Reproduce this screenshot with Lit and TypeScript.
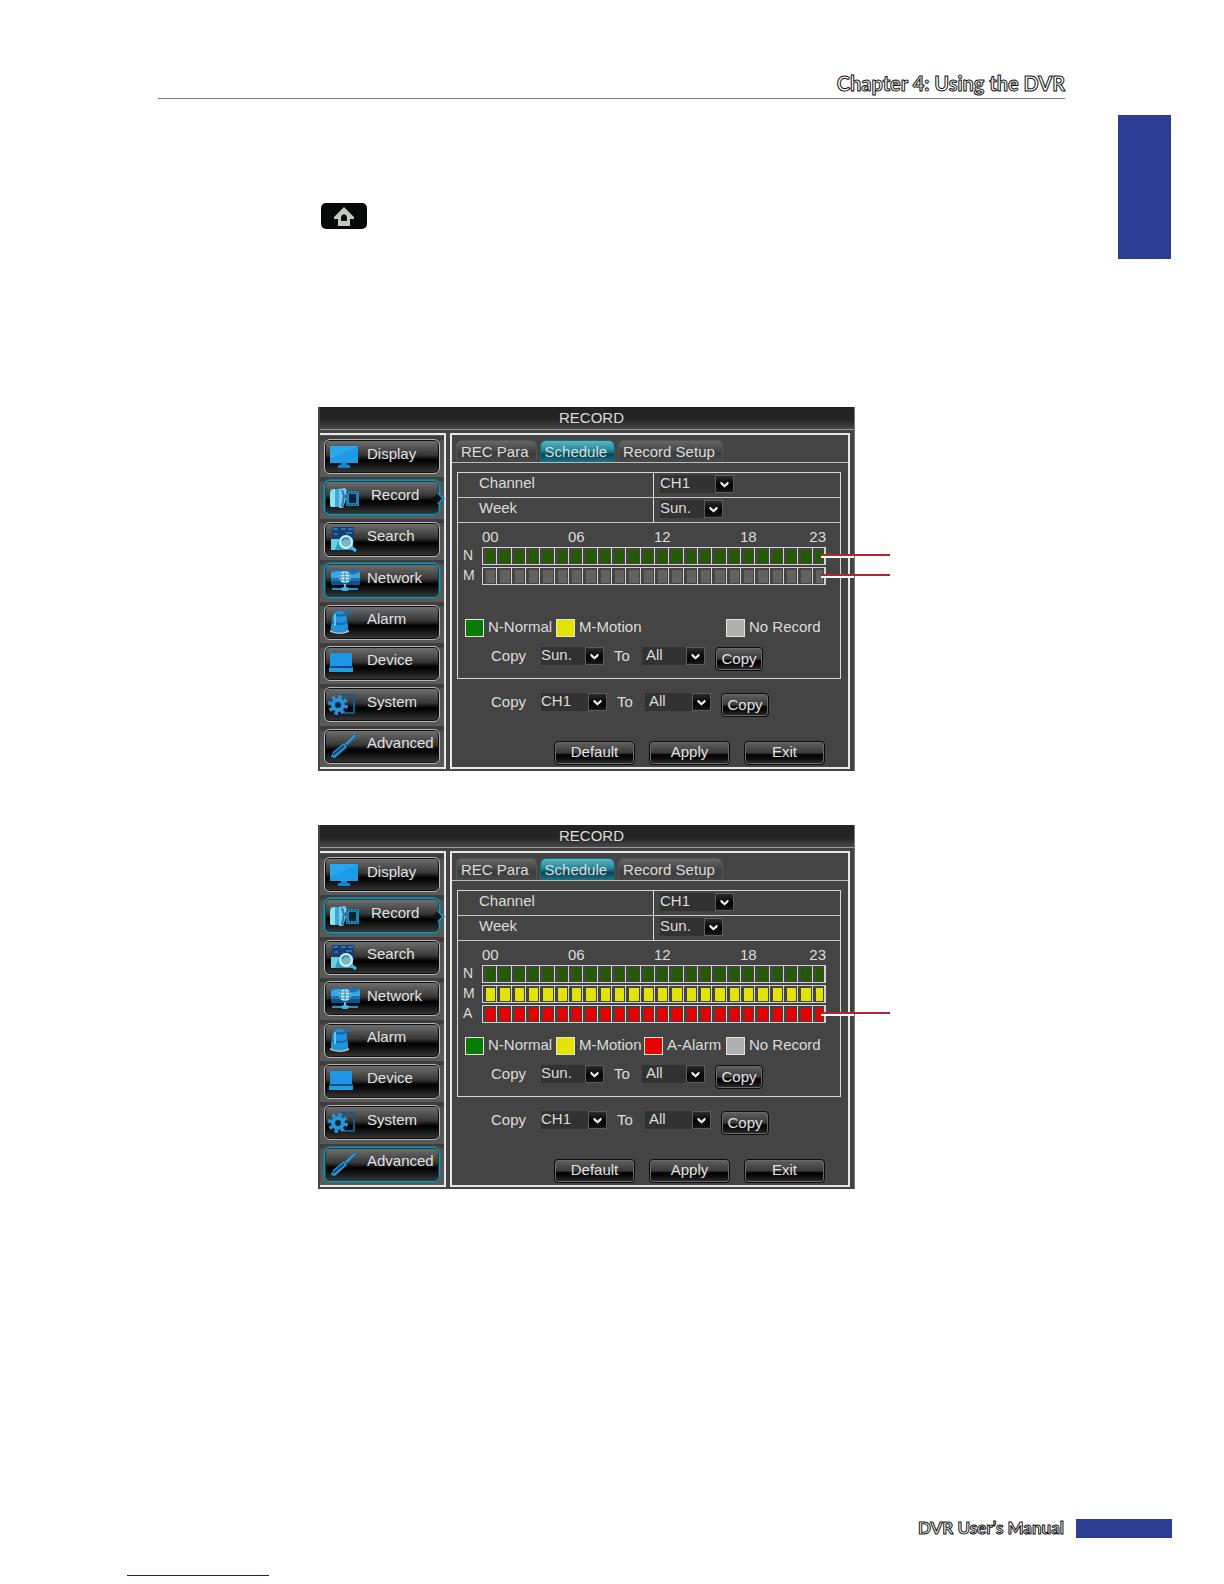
import { LitElement, html, svg, css, nothing } from "lit";
import { customElement, property } from "lit/decorators.js";
import { classMap } from "lit/directives/class-map.js";

const icons: Record<string, unknown> = {
  Display: svg`
    <rect x="2" y="3" width="28" height="17" fill="#1c9be8"/>
    <path d="M2 3h28L2 16z" fill="#2aa6ee"/>
    <path d="M13 20h6v2h3v3H10v-3h3z" fill="#1583cc"/>`,
  Record: svg`
    <path d="M4 5h8v18H4a2 2 0 0 1-2-2V7a2 2 0 0 1 2-2z" fill="#3aa9d2"/>
    <path d="M2 9q2-4 5-4v18H4a2 2 0 0 1-2-2z" fill="#8fe3f2"/>
    <path d="M11 5l6-1 2 3-2 5 1 3-3 9-4 0z" fill="#7bc8ea"/>
    <path d="M14 6l2 6-2 11" stroke="#2379b8" stroke-width="2" fill="none"/>
    <rect x="18" y="7" width="13" height="15" fill="#1688b8"/>
    <rect x="21" y="10" width="7" height="9" fill="#0b2434"/>
    <path d="M19 8.500h12M19 20.500h12" stroke="#0b2434" stroke-dasharray="1 2"/>`,
  Search: svg`
    <rect x="4" y="2" width="22" height="15" fill="#173e6e"/>
    <path d="M5 4h5M13 4h5M20 4h5M6 9h4M18 8h6" stroke="#2b72b4" stroke-width="2"/>
    <path d="M3 14h22v11H3z" fill="#2a9fc4"/>
    <path d="M3 14h8l-4 11H3z" fill="#62d2e4"/>
    <circle cx="18" cy="17" r="6" fill="#78b8cc" stroke="#d5f2f6" stroke-width="2"/>
    <path d="M14 16q2-4 7-2" stroke="#3e93b4" stroke-width="2" fill="none"/>
    <path d="M23 22l5 4" stroke="#49b7dc" stroke-width="3"/>`,
  Network: svg`
    <rect x="3" y="3" width="29" height="15" fill="#1774b8"/>
    <path d="M3 6q8-4 14 0t15-1v6H3z" fill="#3fa6dc"/>
    <path d="M3 14h29v4H3z" fill="#0f538a"/>
    <circle cx="17" cy="10" r="6" fill="#cdebf4"/>
    <path d="M11 10h12M17 4v12M13 6q-2 4 0 8M21 6q2 4 0 8M12 7h10M12 13h10" stroke="#2a8bbd" fill="none"/>
    <path d="M4 22h26" stroke="#2393cf" stroke-width="2"/>
    <path d="M17 17v5" stroke="#5cc5ea" stroke-width="2"/>
    <ellipse cx="17" cy="22" rx="4" ry="2" fill="#4bb4e4"/>`,
  Alarm: svg`
    <path d="M5 5q7-4 13 0l2 13v5q-9 4-17 0v-5z" fill="#1f93dc"/>
    <path d="M5 6q6 3 13 0M4 14q8 4 15 0" stroke="#1268a8" stroke-width="2" fill="none"/>
    <path d="M7 6v12" stroke="#66c2f0" stroke-width="2"/>
    <path d="M2 22q9 5 19 0v2q-9 4-19 0z" fill="#b9b9b9"/>
    <path d="M18 4l3-2M21 6q1-3 4-3" stroke="#1774b8" stroke-width="2" fill="none"/>`,
  Device: svg`
    <path d="M2 4h22v14H2z" fill="#1c97e6"/>
    <path d="M1 17h24v2H1z" fill="#0c4d80"/>
    <path d="M1 19h24v4H1z" fill="#1f9fe0"/>`,
  System: svg`
    <path d="M12 4h14v18H16" fill="none" stroke="#17578c" stroke-width="2"/>
    <circle cx="10" cy="14" r="7" fill="#2196e0"/>
    <circle cx="10" cy="14" r="8" fill="none" stroke="#2196e0" stroke-width="4" stroke-dasharray="3.3 2.98"/>
    <circle cx="10" cy="14" r="3" fill="#0b2434"/>`,
  Advanced: svg`
    <path d="M28 2L17 11l2 3 9-9z" fill="#1b7cc4"/>
    <path d="M16 11l-11 9-2 5 4 1 12-11z" fill="#2196e0"/>
    <path d="M5 23l11-9" stroke="#0c3f68" stroke-width="2"/>
    <path d="M27 3L18 12" stroke="#4bb4ee"/>`,
};

const hourMarks = [
  { label: "00", span: 6 },
  { label: "06", span: 6 },
  { label: "12", span: 6 },
  { label: "18", span: 4 },
  { label: "23", span: 2 },
];

interface ScheduleRow {
  code: string;
  kind: string;
  callout?: boolean;
}
interface LegendItem {
  label: string;
  kind: string;
}

@customElement("dvr-panel")
class DvrPanel extends LitElement {
  @property({ attribute: false }) rows: ScheduleRow[] = [];
  @property({ attribute: false }) legend: (LegendItem | null)[] = [];
  @property() focused = "";

  static styles = css`
    :host {
      display: block;
      box-sizing: border-box;
      position: relative;
      padding: 0 4px 2px 2px;
      background: #444;
      border-right: 1px solid #777;
      color: #dcdcdc;
      font: 15px/18px "Liberation Sans", Arial, sans-serif;
    }
    * {
      box-sizing: border-box;
    }
    .title {
      margin: 0 -4px 3px 0;
      height: 23px;
      padding-left: 9px;
      border-bottom: 1px solid #999;
      background: linear-gradient(#242424 55%, #474747);
      line-height: 22px;
      text-align: center;
    }
    .frame {
      display: grid;
      grid-template-columns: 126px 1fr;
      column-gap: 4px;
    }
    .menu {
      display: grid;
      grid-auto-rows: 1fr;
      padding: 1px 4px 0 0;
      border: solid #e8e8e8;
      border-width: 2px 2px 2px 0;
      background: #555;
    }
    .slot {
      padding: 3px 1px 3px 4px;
      margin-right: -4px;
      background: linear-gradient(#3e3e3e 4px, #505050 5px, #5a5a5a);
    }
    .item {
      position: relative;
      display: flex;
      align-items: center;
      width: 116px;
      height: 35px;
      padding: 0 0 0 3px;
      border: 1px solid #b4b4b4;
      border-radius: 6px;
      background: linear-gradient(#727272, #363636 45%, #000 60%, #0c0c0c 70%, #383838);
      box-shadow: inset 0 0 0 1px #111;
      color: #e2e2e2;
      font: 15px/18px "Liberation Sans", Arial, sans-serif;
      gap: 7px;
    }
    .item span {
      padding-bottom: 6px;
    }
    .item svg {
      flex: none;
      width: 32px;
      height: 28px;
    }
    .item.lit {
      border-color: #2092aa;
      box-shadow: inset 0 0 0 1px #0c4450, 0 0 0 1px #1c7486;
    }
    .item.current {
      gap: 11px;
    }
    .item.current::after {
      content: "";
      position: absolute;
      right: -4px;
      top: 13px;
      width: 7px;
      height: 7px;
      border: solid #2092aa;
      border-width: 2px 2px 0 0;
      background: #111;
      transform: rotate(45deg);
    }
    .main {
      display: flex;
      flex-direction: column;
      border: 2px solid #e8e8e8;
    }
    .tabs {
      display: flex;
      gap: 3px;
      padding-top: 5px;
      border-bottom: 1px solid #bbb;
    }
    .tab {
      height: 22px;
      padding: 0 7px 0 4px;
      border: 1px solid #555;
      border-bottom: 0;
      border-radius: 6px 6px 0 0;
      background: linear-gradient(#666, #3c3c3c 60%, #484848);
      color: #dcdcdc;
      font: 15px/20px "Liberation Sans", Arial, sans-serif;
    }
    .tab:first-child {
      margin-left: 4px;
    }
    .tab.on {
      border-color: #1b6a78;
      background: linear-gradient(#5fb4c2, #1f8798 45%, #0a4450 65%, #19748a);
    }
    .box {
      margin: 9px 7px 0 5px;
      padding-bottom: 7px;
      border: 1px solid #d8d8d8;
    }
    .field {
      display: grid;
      grid-template-columns: 196px 1fr;
      height: 25px;
      border-bottom: 1px solid #c8c8c8;
    }
    .field label {
      padding: 1px 0 0 21px;
      border-right: 1px solid #e0e0e0;
    }
    .field .pick {
      justify-self: start;
      margin: 2px 0 0 6px;
    }
    .pick {
      display: grid;
      height: 18px;
    }
    .pick select,
    .pick .arrow {
      grid-area: 1 / 1;
    }
    .pick select {
      appearance: none;
      width: 100%;
      height: 18px;
      margin: 0;
      padding: 0 20px 2px 0;
      border: 0;
      border-radius: 0;
      background: #323232;
      color: #dcdcdc;
      font: 15px/16px "Liberation Sans", Arial, sans-serif;
    }
    .pick.inset select {
      padding-left: 4px;
    }
    .pick .arrow {
      justify-self: end;
      width: 19px;
      height: 18px;
      border: 1px solid #5c5c5c;
      background: linear-gradient(#2c2c2c, #000 60%, #1a1a1a);
      pointer-events: none;
    }
    .wide {
      width: 74px;
    }
    .slim {
      width: 63px;
    }
    .mid {
      width: 66px;
    }
    .plan {
      min-height: 96px;
      padding: 0 14px 0 5px;
    }
    table {
      width: 100%;
      table-layout: fixed;
      border-spacing: 0 2px;
    }
    .gutter {
      width: 19px;
    }
    th {
      padding: 0;
      font-weight: 400;
      text-align: left;
      white-space: nowrap;
    }
    thead th {
      height: 20px;
      padding-top: 4px;
      line-height: 16px;
    }
    thead th:last-child {
      text-align: right;
    }
    tbody th {
      height: 18px;
      padding-bottom: 2px;
      line-height: 14px;
      font-size: 14px;
    }
    td {
      height: 18px;
      padding: 2px 1px 1px 3px;
      border: solid #cfd2cf;
      border-width: 1px 0 1px 1px;
      background-clip: content-box;
    }
    td:last-child {
      border-right: 2px solid #cfd2cf;
    }
    .normal {
      background-color: #245a00;
    }
    .none {
      background-color: #626262;
    }
    .motion {
      background-color: #e2e400;
    }
    .alarm {
      background-color: #e60000;
    }
    .legend {
      display: grid;
      grid-template-columns: 91px 88px 82px 1fr;
      margin: 0;
      padding: 0 0 0 7px;
      list-style: none;
      white-space: nowrap;
    }
    .legend li {
      display: flex;
      gap: 4px;
      height: 18px;
      line-height: 16px;
    }
    .swatch {
      width: 19px;
      height: 18px;
      border: 1px solid #e4e4d0;
    }
    .swatch.normal {
      background-color: #087a08;
    }
    .swatch.none {
      background-color: #b0b0b0;
    }
    .copy {
      display: grid;
      grid-template-columns: 50px auto 38px auto 48px;
      align-items: start;
      justify-content: start;
      padding-left: 33px;
      margin-top: 10px;
    }
    .copy.channels {
      margin-top: 14px;
      padding-left: 39px;
    }
    .to {
      padding-left: 10px;
    }
    .copy .push {
      margin-left: 10px;
      margin-right: -10px;
    }
    .push {
      height: 24px;
      padding: 0;
      border: 1px solid #0c0c0c;
      border-radius: 4px;
      background: linear-gradient(#606060, #3a3a3a 50%, #000 58%, #0c0c0c 75%, #303030);
      box-shadow: inset 0 0 0 1px #6a6a6a;
      color: #e2e2e2;
      font: 15px/20px "Liberation Sans", Arial, sans-serif;
    }
    .actions {
      display: flex;
      justify-content: flex-end;
      gap: 14px;
      padding: 24px 23px 2px 0;
    }
    .actions .push {
      width: 81px;
      padding-bottom: 2px;
    }
    .anchor {
      position: relative;
    }
    .callout {
      position: absolute;
      left: 8px;
      top: 6px;
      width: 69px;
      height: 4px;
      background: linear-gradient(#b0272f 2px, transparent 2px);
    }
    .callout::after {
      content: "";
      position: absolute;
      left: 0;
      top: 2px;
      width: 33px;
      height: 2px;
      background: #fff;
    }
  `;

  private pick(id: string, name: string, value: string, look: string) {
    return html`<span class="pick ${look}">
      <select id=${id} aria-label=${name}>
        <option>${value}</option>
      </select>
      <svg class="arrow" viewBox="0 0 17 16" aria-hidden="true">
        <path d="M5 6l3.500 3L12 6v2l-3.500 3L5 8z" fill="#f2f2f2" stroke="#f2f2f2" />
      </svg>
    </span>`;
  }

  private copyRow(kind: string, value: string, size: string) {
    return html`<div class=${classMap({ copy: true, channels: kind === "channel" })}>
      <label for="from-${kind}">Copy</label>
      ${this.pick(`from-${kind}`, `Copy from ${kind}`, value, size)}
      <label class="to" for="to-${kind}">To</label>
      ${this.pick(`to-${kind}`, `Copy to ${kind}`, "All", `${size} inset`)}
      <button class="push">Copy</button>
    </div>`;
  }

  render() {
    const cells = Array.from({ length: 24 }, (_, i) => i);
    return html`
      <div class="title">RECORD</div>
      <div class="frame">
        <nav class="menu">
          ${Object.keys(icons).map(
            (name) => html`<div class="slot">
              <button
                class=${classMap({
                  item: true,
                  lit: name === "Record" || name === this.focused,
                  current: name === "Record",
                })}
              >
                <svg viewBox="0 0 32 28" aria-hidden="true">${icons[name]}</svg>
                <span>${name}</span>
              </button>
            </div>`
          )}
        </nav>
        <section class="main">
          <div class="tabs">
            <button class="tab">REC Para</button>
            <button class="tab on">Schedule</button>
            <button class="tab">Record Setup</button>
          </div>
          <div class="box">
            <div class="field">
              <label for="channel">Channel</label>
              ${this.pick("channel", "Channel", "CH1", "wide")}
            </div>
            <div class="field">
              <label for="week">Week</label>
              ${this.pick("week", "Week", "Sun.", "slim")}
            </div>
            <div class="plan">
              <table>
                <colgroup>
                  <col class="gutter" />
                  ${cells.map(() => html`<col />`)}
                </colgroup>
                <thead>
                  <tr>
                    <th></th>
                    ${hourMarks.map((m) => html`<th colspan=${m.span}>${m.label}</th>`)}
                  </tr>
                </thead>
                <tbody>
                  ${this.rows.map(
                    (r) => html`<tr>
                      <th>${r.code}</th>
                      ${cells.map((i) =>
                        r.callout && i === 23
                          ? html`<td class="${r.kind} anchor"><i class="callout"></i></td>`
                          : html`<td class=${r.kind}></td>`
                      )}
                    </tr>`
                  )}
                </tbody>
              </table>
            </div>
            <ul class="legend">
              ${this.legend.map((l) =>
                l
                  ? html`<li><i class="swatch ${l.kind}"></i>${l.label}</li>`
                  : html`<li>${nothing}</li>`
              )}
            </ul>
            ${this.copyRow("day", "Sun.", "slim")}
          </div>
          ${this.copyRow("channel", "CH1", "mid")}
          <div class="actions">
            <button class="push">Default</button>
            <button class="push">Apply</button>
            <button class="push">Exit</button>
          </div>
        </section>
      </div>
    `;
  }
}

@customElement("app-root")
class AppRoot extends LitElement {
  static styles = css`
    :host {
      display: flex;
      flex-direction: column;
      box-sizing: border-box;
      min-height: 100vh;
      padding-bottom: 8px;
      background: #fff;
      font-family: Lato, "Open Sans", sans-serif;
    }
    .head {
      margin: 0 159px 0 158px;
      padding: 69px 0 1px;
      border-bottom: 1px solid #777;
      text-align: right;
    }
    h1,
    .manual {
      margin: 0;
      color: #fff;
      font-weight: 700;
      -webkit-text-stroke: 1px #111;
    }
    h1 {
      font-size: 20px;
      line-height: 28px;
    }
    .body {
      display: flex;
      align-items: flex-start;
      padding-right: 53px;
    }
    .content {
      flex: 1;
      display: grid;
      grid-template-columns: 318fr minmax(537px, 537fr) 263fr;
      padding-top: 104px;
    }
    .content > * {
      grid-column: 2;
    }
    .home {
      display: grid;
      place-items: center;
      width: 46px;
      height: 26px;
      margin: 0 0 178px 3px;
      padding: 2px 0 0;
      border: 0;
      border-radius: 5px;
      background: #070908;
    }
    .home svg {
      width: 20px;
      height: 20px;
    }
    .second {
      margin-top: 54px;
    }
    .edge {
      width: 53px;
      height: 144px;
      margin-top: 16px;
      background: #2c3e94;
    }
    footer {
      display: flex;
      justify-content: flex-end;
      align-items: center;
      gap: 12px;
      margin-top: auto;
      padding: 0 52px 37px 0;
    }
    .manual {
      padding-bottom: 2px;
      font-size: 17px;
      line-height: 17px;
    }
    .chip {
      width: 96px;
      height: 19px;
      background: #2c3e94;
    }
    .rule {
      width: 142px;
      height: 1px;
      margin-left: 127px;
      background: #1a1a8c;
    }
  `;

  render() {
    return html`
      <header class="head"><h1>Chapter 4: Using the DVR</h1></header>
      <main class="body">
        <div class="content">
          <button class="home" aria-label="Home">
            <svg viewBox="0 0 20 20" aria-hidden="true">
              <path d="M10 0L0 10v2h4v7h12v-7h4v-2z" fill="#c3c9c0" />
              <path d="M10 7q3 1 3 4v3H7v-3q0-3 3-4z" fill="#0b0d0b" />
            </svg>
          </button>
          <dvr-panel
            focused="Network"
            .rows=${[
              { code: "N", kind: "normal", callout: true },
              { code: "M", kind: "none", callout: true },
            ]}
            .legend=${[
              { label: "N-Normal", kind: "normal" },
              { label: "M-Motion", kind: "motion" },
              null,
              { label: "No Record", kind: "none" },
            ]}
          ></dvr-panel>
          <dvr-panel
            class="second"
            focused="Advanced"
            .rows=${[
              { code: "N", kind: "normal" },
              { code: "M", kind: "motion" },
              { code: "A", kind: "alarm", callout: true },
            ]}
            .legend=${[
              { label: "N-Normal", kind: "normal" },
              { label: "M-Motion", kind: "motion" },
              { label: "A-Alarm", kind: "alarm" },
              { label: "No Record", kind: "none" },
            ]}
          ></dvr-panel>
        </div>
        <div class="edge"></div>
      </main>
      <footer><span class="manual">DVR User’s Manual</span><span class="chip"></span></footer>
      <div class="rule"></div>
    `;
  }
}
